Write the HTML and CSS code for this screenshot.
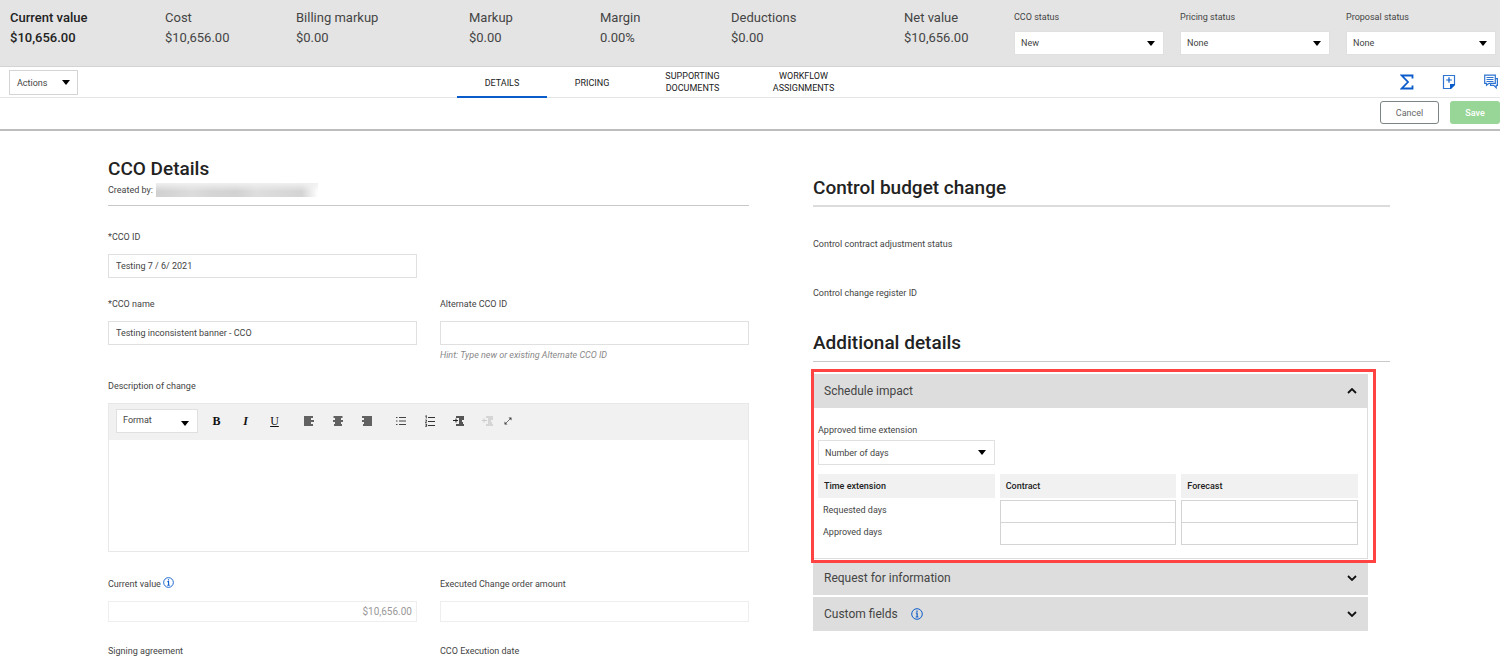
FILE: index.html
```html
<!DOCTYPE html>
<html lang="en">
<head>
  <meta charset="utf-8">
  <title>CCO Details</title>
  <link rel="stylesheet" href="styles.css">
</head>
<body>
  <header class="summary">
    <dl class="totals">
      <div class="total current"><dt>Current value</dt><dd>$10,656.00</dd></div>
      <div class="total"><dt>Cost</dt><dd>$10,656.00</dd></div>
      <div class="total"><dt>Billing markup</dt><dd>$0.00</dd></div>
      <div class="total"><dt>Markup</dt><dd>$0.00</dd></div>
      <div class="total"><dt>Margin</dt><dd>0.00%</dd></div>
      <div class="total"><dt>Deductions</dt><dd>$0.00</dd></div>
      <div class="total"><dt>Net value</dt><dd>$10,656.00</dd></div>
    </dl>
    <div class="statuses">
      <div class="status">
        <label for="ccoStatus">CCO status</label>
        <select id="ccoStatus"><option>New</option></select>
      </div>
      <div class="status">
        <label for="pricingStatus">Pricing status</label>
        <select id="pricingStatus"><option>None</option></select>
      </div>
      <div class="status">
        <label for="proposalStatus">Proposal status</label>
        <select id="proposalStatus"><option>None</option></select>
      </div>
    </div>
  </header>

  <div class="navbar">
    <div class="nav-left">
      <button class="actions">Actions
        <svg width="8" height="5" viewBox="0 0 8 5"><path d="M0 0h8L4 5z"/></svg>
      </button>
    </div>
    <nav class="tabs">
      <a class="tab active" href="#details">DETAILS</a>
      <a class="tab" href="#pricing">PRICING</a>
      <a class="tab wide" href="#documents">SUPPORTING DOCUMENTS</a>
      <a class="tab wide" href="#workflow">WORKFLOW ASSIGNMENTS</a>
    </nav>
    <div class="nav-icons">
      <button class="icon" aria-label="Totals">
        <svg width="14" height="16" viewBox="0 0 14 16"><path d="M12.500 4.500V1.500H1.800L8 8l-6.200 6.500h10.700V11.500" fill="none" stroke="#0b5ccb" stroke-width="1.800"/></svg>
      </button>
      <button class="icon" aria-label="Add note">
        <svg width="14" height="16" viewBox="0 0 14 16"><path d="M1.500 1.500h11v9l-4 4h-7z" fill="none" stroke="#2f74d0" stroke-width="1.200"/><path d="M13 10v1l-4 4H8v-5z" fill="#0b5ccb"/><path d="M7 3.200v5.600M4.200 6h5.600" stroke="#0b5ccb" stroke-width="1.200"/></svg>
      </button>
      <button class="icon" aria-label="Comments">
        <svg width="14" height="16" viewBox="0 0 14 16"><path d="M.7 1.200h10.600v8.100H5l-2.500 2V9.300H.7zM11.300 4.700h2.100v6.600h-1.200v2.500l-2.400-2.500H6.500V9.500" fill="none" stroke="#2f74d0" stroke-width="1.200"/><path d="M2.500 3.500h7M2.500 5.500h7M2.500 7.500h7" stroke="#2f74d0"/></svg>
      </button>
    </div>
  </div>

  <div class="actionbar">
    <button class="btn cancel">Cancel</button>
    <button class="btn save">Save</button>
  </div>

  <main class="content">
    <section class="details">
      <div class="section-head">
        <h2>CCO Details</h2>
        <p class="created">Created by: <span class="redacted"></span></p>
      </div>

      <div class="fields">
        <div class="field">
          <label for="ccoId">*CCO ID</label>
          <input type="text" id="ccoId" value="Testing 7 / 6/ 2021">
        </div>
        <div class="field new-row">
          <label for="ccoName">*CCO name</label>
          <input type="text" id="ccoName" value="Testing inconsistent banner - CCO">
        </div>
        <div class="field">
          <label for="altId">Alternate CCO ID</label>
          <input type="text" id="altId">
          <p class="hint">Hint: Type new or existing Alternate CCO ID</p>
        </div>
      </div>

      <div class="field">
        <label for="description">Description of change</label>
        <div class="editor">
          <div class="toolbar">
            <select class="format" aria-label="Format"><option>Format</option></select>
            <div class="tools">
              <button class="tool bold" aria-label="Bold">B</button>
              <button class="tool italic" aria-label="Italic">I</button>
              <button class="tool underline" aria-label="Underline">U</button>
            </div>
            <div class="tools">
              <button class="tool" aria-label="Align left"><svg width="10" height="10" viewBox="0 0 10 10"><path d="M0 1h9M0 3h7M0 5h10M0 7h7M0 9h9" stroke="#333" stroke-width="1.400"/></svg></button>
              <button class="tool" aria-label="Align center"><svg width="10" height="10" viewBox="0 0 10 10"><path d="M.5 1h9M2 3h6M0 5h10M2 7h6M1 9h8" stroke="#333" stroke-width="1.400"/></svg></button>
              <button class="tool" aria-label="Align right"><svg width="10" height="10" viewBox="0 0 10 10"><path d="M0 1h10M2 3h8M0 5h10M2 7h8M1 9h9" stroke="#333" stroke-width="1.400"/></svg></button>
            </div>
            <div class="tools">
              <button class="tool" aria-label="Bullet list"><svg width="10" height="10" viewBox="0 0 10 10"><path d="M0 1.500h1.500M0 5h1.500M0 8.500h1.500M3 1.500h7M3 5h7M3 8.500h7" stroke="#444"/></svg></button>
              <button class="tool" aria-label="Numbered list"><svg width="10" height="12" viewBox="0 0 10 12"><path d="M3 2.500h7M3 6.500h7M3 10.500h7" stroke="#333" stroke-width="1.200"/><path d="M.3 1.300L1.300.5v3M.3 5h1.200v1L.3 7.500h1.400M.3 9h1.300v2.500H.3M.5 10.200h1" fill="none" stroke="#222" stroke-width=".8"/></svg></button>
              <button class="tool" aria-label="Indent"><svg width="12" height="10" viewBox="0 0 12 10"><path d="M3 1h8M6 3h5M6 5h3M6 7h4M3 9h8" stroke="#222" stroke-width="1.500"/><path d="M0 4.500h5M3 2.500v4" stroke="#222"/></svg></button>
              <button class="tool" aria-label="Outdent" disabled><svg width="12" height="10" viewBox="0 0 12 10"><path d="M4 1h7M6 3h5M6 5h3M6 7h4M4 9h7" stroke="#ccc" stroke-width="1.400"/><path d="M0 4.500h5M2 2.500v4" stroke="#ccc"/></svg></button>
              <button class="tool narrow" aria-label="Expand"><svg width="8" height="8" viewBox="0 0 8 8"><path d="M1 7l6-6" stroke="#666" stroke-width=".9"/><path d="M4.500.5h3v3zM.5 4.500v3h3z" fill="#444"/></svg></button>
            </div>
          </div>
          <textarea id="description"></textarea>
        </div>
      </div>

      <div class="fields amounts">
        <div class="field">
          <label for="currentValue">Current value
            <svg class="info" width="11" height="11" viewBox="0 0 12 12"><circle cx="6" cy="6" r="5.300" fill="none" stroke="#0b5ccb"/><path d="M6 2.500v1.400M4.800 5h1.300v4M4.700 9h2.700" fill="none" stroke="#0b5ccb" stroke-width="1.200"/></svg>
          </label>
          <input type="text" id="currentValue" class="money" value="$10,656.00" disabled>
        </div>
        <div class="field">
          <label for="executedAmount">Executed Change order amount</label>
          <input type="text" id="executedAmount" disabled>
        </div>
        <div class="field"><p class="label">Signing agreement</p></div>
        <div class="field"><p class="label">CCO Execution date</p></div>
      </div>
    </section>

    <section class="side">
      <h2 class="ruled thick">Control budget change</h2>
      <div class="readonly">
        <p class="label">Control contract adjustment status</p>
        <p class="label">Control change register ID</p>
      </div>
      <h2 class="ruled">Additional details</h2>

      <div class="accordion">
        <div class="panel open">
          <button class="panel-head" aria-expanded="true">Schedule impact
            <svg class="chevron" width="10" height="6" viewBox="0 0 10 6"><path d="M1 5l4-4 4 4" fill="none" stroke="#111" stroke-width="1.800"/></svg>
          </button>
          <div class="panel-body">
            <div class="extension">
              <label for="extension">Approved time extension</label>
              <select id="extension"><option>Number of days</option></select>
            </div>
            <table class="days">
              <thead>
                <tr><th>Time extension</th><th>Contract</th><th>Forecast</th></tr>
              </thead>
              <tbody>
                <tr>
                  <td>Requested days</td>
                  <td><input type="text" aria-label="Requested days, contract"></td>
                  <td><input type="text" aria-label="Requested days, forecast"></td>
                </tr>
                <tr>
                  <td>Approved days</td>
                  <td><input type="text" aria-label="Approved days, contract"></td>
                  <td><input type="text" aria-label="Approved days, forecast"></td>
                </tr>
              </tbody>
            </table>
          </div>
          <div class="highlight"></div>
        </div>
        <div class="panel">
          <button class="panel-head" aria-expanded="false">Request for information
            <svg class="chevron" width="10" height="6" viewBox="0 0 10 6"><path d="M1 1l4 4 4-4" fill="none" stroke="#111" stroke-width="1.800"/></svg>
          </button>
        </div>
        <div class="panel">
          <button class="panel-head" aria-expanded="false">Custom fields
            <svg width="12" height="12" viewBox="0 0 12 12"><circle cx="6" cy="6" r="5.300" fill="none" stroke="#0b5ccb"/><path d="M6 2.500v1.400M4.800 5h1.300v4M4.700 9h2.700" fill="none" stroke="#0b5ccb" stroke-width="1.200"/></svg>
            <svg class="chevron" width="10" height="6" viewBox="0 0 10 6"><path d="M1 1l4 4 4-4" fill="none" stroke="#111" stroke-width="1.800"/></svg>
          </button>
        </div>
      </div>
    </section>
  </main>
</body>
</html>
```
FILE: styles.css
```css
* {
  box-sizing: border-box;
}

body {
  margin: 0;
  font-family: Roboto, "Liberation Sans", sans-serif;
  font-size: 9px;
  line-height: 14px;
  color: #444;
  background-color: #fff;
  overflow: hidden;
}

h2, p, dl, dd {
  margin: 0;
}

button, input, select, textarea {
  font: inherit;
  color: inherit;
  margin: 0;
}

button {
  padding: 0;
  border: none;
  background: none;
  cursor: pointer;
}

select {
  appearance: none;
  height: 24px;
  padding: 0 20px 0 6px;
  border: 1px solid #e0e0e0;
  border-radius: 0;
  background: #fff url("data:image/svg+xml,%3Csvg xmlns='http://www.w3.org/2000/svg' width='8' height='5'%3E%3Cpath d='M0 0h8L4 5z'/%3E%3C/svg%3E") no-repeat right 8px center;
}

label, .label {
  display: block;
}

/* summary header */
.summary {
  display: flex;
  height: 67px;
  padding: 8px 4px 0 10px;
  background-color: #e4e4e4;
  border-bottom: 1px solid #d4d4d4;
}

.totals {
  flex: 1;
  display: grid;
  grid-template-columns: 155fr 131fr 173fr 131fr 131fr 173fr 110fr;
  font-size: 13px;
  line-height: 20px;
}

.current {
  font-weight: 500;
  color: #222;
}

.statuses {
  display: flex;
  gap: 16px;
}

.status {
  width: 150px;
  padding-top: 2px;
}

.status select {
  width: 100%;
  margin-top: 7px;
}

/* tabs */
.navbar {
  display: flex;
  height: 31px;
  border-bottom: 1px solid #e4e4e4;
}

.nav-left {
  flex: 439;
  padding: 3px 9px;
}

.actions {
  display: flex;
  align-items: center;
  justify-content: space-between;
  width: 69px;
  height: 25px;
  padding: 0 7px;
  border: 1px solid #d4d4d4;
}

.tabs {
  display: flex;
}

.tab {
  display: flex;
  align-items: center;
  justify-content: center;
  width: 90px;
  height: 31px;
  padding-top: 2px;
  border-bottom: 2px solid transparent;
  line-height: 12px;
  text-align: center;
  text-decoration: none;
  color: #222;
}

.tab.wide {
  width: 111px;
  padding: 0 20px;
}

.tab.active {
  border-color: #0b5ccb;
}

.nav-icons {
  flex: 639;
  display: flex;
  align-items: center;
  justify-content: flex-end;
  gap: 28px;
  padding-right: 2px;
}

.icon {
  display: flex;
}

.actionbar {
  display: flex;
  justify-content: flex-end;
  gap: 11px;
  height: 33px;
  padding-top: 3px;
  border-bottom: 2px solid #bdbdbd;
}

.btn {
  height: 23px;
  border-radius: 3px;
}

.cancel {
  width: 59px;
  border: 1px solid #7c8585;
  color: #666;
}

.save {
  width: 50px;
  background-color: #98d698;
  color: #fff;
  font-weight: 500;
}

/* form */
.content {
  display: grid;
  grid-template-columns: 641fr 577fr;
  gap: 64px;
  padding: 26px 110px 0 108px;
}

h2 {
  font-size: 19px;
  line-height: 24px;
  font-weight: 500;
  color: #222;
}

.section-head {
  padding-bottom: 8px;
  border-bottom: 1px solid #c8c8c8;
}

.created {
  display: flex;
  gap: 3px;
  margin-top: 2px;
}

.redacted {
  width: 162px;
  height: 14px;
  background: linear-gradient(#f0f0f0, transparent 60%), linear-gradient(90deg, #d0d0d0, #dcdcdc 22%, #d6d6d6 32%, #d2d2d2 50%, #dedede 62%, #d4d4d4 90%, #fff);
}

.fields {
  display: grid;
  grid-template-columns: 1fr 1fr;
  gap: 19px 23px;
  padding: 24px 0 18px;
}

.new-row {
  grid-column-start: 1;
}

.field input {
  display: block;
  width: 100%;
  height: 24px;
  margin-top: 10px;
  padding: 0 7px;
  border: 1px solid #e0e0e0;
}

.hint {
  margin-top: 4px;
  line-height: 12px;
  font-style: italic;
  color: #888;
}

.editor {
  margin-top: 10px;
  border: 1px solid #e8e8e8;
}

.toolbar {
  display: flex;
  align-items: center;
  height: 36px;
  padding: 0 0 2px 7px;
  background-color: #f1f1f1;
}

.format {
  width: 82px;
  margin-right: 4px;
  padding-bottom: 2px;
  background-position: right 8px bottom 6px;
}

.tools {
  display: flex;
  margin-right: 5px;
}

.tool {
  display: flex;
  align-items: center;
  justify-content: center;
  width: 29px;
  height: 20px;
  font-family: "Liberation Serif", serif;
  font-size: 12px;
  color: #111;
}

.tool.narrow {
  width: 12px;
}

.bold, .italic {
  font-weight: bold;
}

.italic {
  font-style: italic;
}

.underline {
  text-decoration: underline;
}

.editor textarea {
  display: block;
  width: 100%;
  height: 111px;
  border: none;
  resize: none;
}

.amounts {
  padding-top: 25px;
  row-gap: 22px;
}

.amounts input {
  height: 21px;
  padding: 0 4px;
  border-color: #eee;
  background-color: #fff;
}

.field .money {
  font-size: 10px;
  text-align: right;
  color: #999;
}

.info {
  vertical-align: -1px;
}

/* right column */
.side {
  padding-top: 19px;
}

.ruled {
  padding-bottom: 6px;
  border-bottom: 1px solid #c8c8c8;
}

.thick {
  padding-bottom: 5px;
  border-bottom: 2px solid #dcdcdc;
}

.readonly {
  display: grid;
  gap: 35px;
  padding: 30px 0 31px;
}

.accordion {
  display: grid;
  gap: 2px;
  margin: 12px 22px 0 0;
}

.panel {
  position: relative;
}

.panel.open {
  z-index: 1;
}

.panel-head {
  display: flex;
  align-items: center;
  gap: 13px;
  width: 100%;
  height: 34px;
  padding: 0 11px;
  background-color: #ddd;
  font-size: 12px;
}

.chevron {
  margin-left: auto;
}

.panel-body {
  padding: 15px 4px 13px 0;
  border-right: 1px solid #ddd;
  border-bottom: 1px solid #ddd;
}

.extension {
  width: 182px;
  padding-left: 5px;
}

.extension select {
  width: 100%;
  height: 25px;
  margin-top: 3px;
}

.days {
  width: 100%;
  margin-top: 9px;
  table-layout: fixed;
  border-spacing: 5px 0;
}

.days th {
  height: 26px;
  padding: 0 6px;
  border-bottom: 2px solid #fff;
  background-color: #f1f1f1;
  font-weight: 500;
  text-align: left;
  color: #222;
}

.days td {
  height: 22px;
  padding: 0;
}

.days td:first-child {
  padding: 0 0 3px 5px;
}

.days input {
  display: block;
  width: 100%;
  height: 22px;
  border: 1px solid #d4d4d4;
  border-bottom-width: 0;
}

.days tr:last-child input {
  height: 23px;
  border-bottom-width: 1px;
}

/* callout frame, sits over the open panel */
.highlight {
  position: absolute;
  inset: -5px -8px -4px -2px;
  border: 3px solid #ff4343;
  pointer-events: none;
}
```
